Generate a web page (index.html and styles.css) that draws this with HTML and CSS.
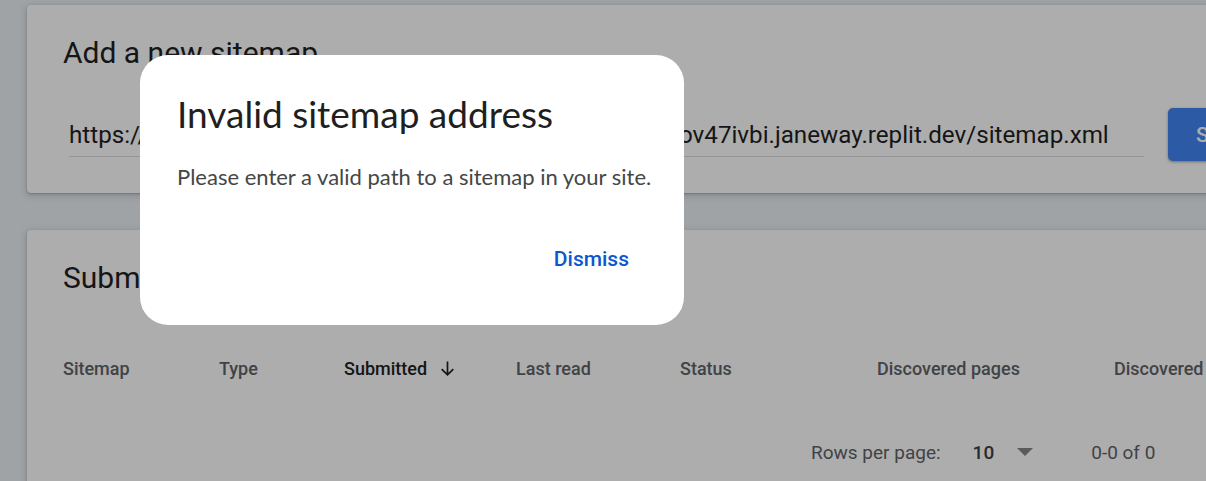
FILE: index.html
```html
<!DOCTYPE html>
<html lang="en">
<head>
<meta charset="utf-8">
<title>Sitemaps</title>
<link rel="stylesheet" href="styles.css">
</head>
<body>
<main class="page">
  <section class="card card-add">
    <h2 class="card-title">Add a new sitemap</h2>
    <div class="add-row">
      <div class="field"><span class="field-text">https://a3f9c2e1-7b4d-4e8a-9c61-2f5d8b0e7a34-00-1x9lov47ivbi.janeway.replit.dev/sitemap.xml</span></div>
      <button class="submit-btn">Submit</button>
    </div>
  </section>
  <section class="card card-list">
    <h2 class="card-title">Submitted sitemaps</h2>
    <div class="thead">
      <div class="th">Sitemap</div>
      <div class="th">Type</div>
      <div class="th th-sorted">Submitted
        <svg class="sort-icon" viewBox="0 0 16 16" width="17" height="17" aria-hidden="true"><path d="M8 1.5v12.5M2.5 8.5L8 14l5.5-5.5" fill="none" stroke="currentColor" stroke-width="1.6"/></svg>
      </div>
      <div class="th">Last read</div>
      <div class="th">Status</div>
      <div class="th">Discovered pages</div>
      <div class="th">Discovered videos</div>
    </div>
    <div class="tfoot">
      <span class="rows-label">Rows per page:</span>
      <span class="rows-select"><span class="rows-value">10</span><span class="caret"></span></span>
      <span class="range">0-0 of 0</span>
    </div>
  </section>
</main>
<div class="scrim"></div>
<div class="dialog" role="alertdialog">
  <h1 class="dialog-title">Invalid sitemap address</h1>
  <p class="dialog-body">Please enter a valid path to a sitemap in your site.</p>
  <div class="dialog-actions"><button class="text-btn">Dismiss</button></div>
</div>
</body>
</html>
```
FILE: styles.css
```css
* { box-sizing: border-box; }
html, body { margin: 0; height: 100%; }
body {
  background: #ecf0f5;
  font-family: Roboto, "Liberation Sans", sans-serif;
  overflow: hidden;
  color: #1f1f1f;
}
.page {
  padding: 5px 0 0 27px;
  width: 1300px;
}
.card {
  background: #ffffff;
  border-radius: 4px 0 0 4px;
  box-shadow: 0 1px 2px rgba(60,64,67,0.3), 0 2px 6px 2px rgba(60,64,67,0.15);
}
.card-add {
  height: 188px;
  padding: 30px 0 0 36px;
  margin-bottom: 37px;
}
.card-title {
  margin: 0;
  font-size: 30px;
  font-weight: 400;
  line-height: 36px;
  color: #1f1f1f;
}
.card-add .add-row { margin-top: 34px; }
.add-row {
  display: flex;
  align-items: flex-start;
  padding-left: 6px;
}
.field {
  width: 1075px;
  height: 52px;
  border-bottom: 1px solid #dadce0;
  white-space: nowrap;
  overflow: hidden;
  padding-top: 16px;
}
.field-text {
  font-size: 24.2px;
  line-height: 28px;
  color: #1f1f1f;
}
.submit-btn {
  margin-left: 24px;
  margin-top: 3px;
  height: 53px;
  padding: 0 28px;
  border: 0;
  border-radius: 5px;
  background: #4285f4;
  color: #ffffff;
  font: 500 21px Roboto, sans-serif;
  box-shadow: 0 1px 2px rgba(60,64,67,0.3), 0 1px 3px 1px rgba(60,64,67,0.15);
}
.card-list {
  height: 300px;
  padding: 30px 0 0 36px;
}
.thead {
  display: grid;
  grid-template-columns: 156px 125px 172px 164px 197px 237px auto;
  margin-top: 57px;
  height: 30px;
  align-items: center;
}
.th {
  font-size: 18px;
  font-weight: 500;
  color: #5f6368;
  white-space: nowrap;
  display: flex;
  align-items: center;
}
.th-sorted { color: #1f1f1f; }
.sort-icon { margin-left: 12px; color: #1f1f1f; }
.tfoot {
  display: flex;
  align-items: center;
  margin-top: 54px;
  padding-left: 748px;
  font-size: 19px;
  color: #5f6368;
  height: 30px;
}
.rows-select {
  display: flex;
  align-items: center;
  margin-left: 32px;
}
.rows-value { font-weight: 500; color: #3c4043; }
.caret {
  margin-left: 23px;
  width: 0; height: 0;
  border-left: 8.5px solid transparent;
  border-right: 8.5px solid transparent;
  border-top: 8px solid #80868b;
}
.range { margin-left: 58px; }
.scrim {
  position: fixed;
  inset: 0;
  background: rgba(0,0,0,0.32);
}
.dialog {
  position: absolute;
  left: 140px;
  top: 55px;
  width: 544px;
  height: 270px;
  background: #ffffff;
  border-radius: 28px;
  padding: 37px 36px 0 37px;
  font-family: Lato, "Open Sans", sans-serif;
}
.dialog-title {
  margin: 0;
  font-size: 37px;
  font-weight: 400;
  line-height: 44px;
  color: #1f1f1f;
}
.dialog-body {
  margin: 26px -20px 0 0;
  font-size: 22px;
  line-height: 30px;
  color: #444746;
  white-space: nowrap;
}
.dialog-actions {
  display: flex;
  justify-content: flex-end;
  margin-top: 46px;
}
.text-btn {
  border: 0;
  background: none;
  padding: 0 19px;
  height: 42px;
  font: 500 21px Roboto, sans-serif;
  color: #0b57d0;
}
```
